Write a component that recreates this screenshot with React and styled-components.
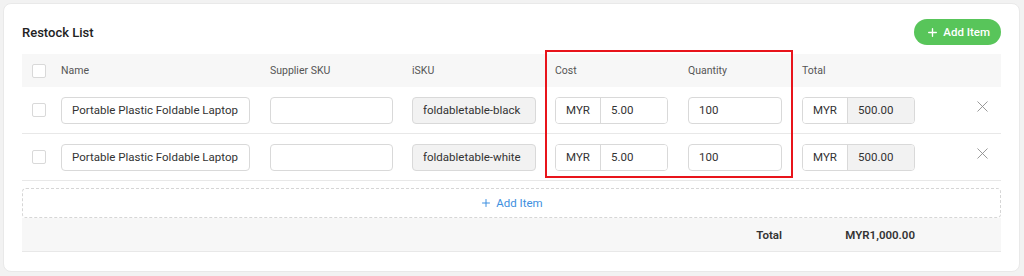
import React from 'react'
import styled, { createGlobalStyle } from 'styled-components'
import { X, Plus } from 'lucide-react'

const GlobalStyle = createGlobalStyle`
body {
    margin: 0;
    background: #f2f2f2;
    font-family: Roboto, "Liberation Sans", sans-serif;
}
`

const COLS = '29px 209px 142px 143px 133px 114px 113px 1fr'

const Card = styled.div`
margin: 3px;
width: 1017px;
height: 269px;
box-sizing: border-box;
background: #fff;
border: 1px solid #e9e9e9;
border-radius: 8px;
padding: 15px 18px 0 18px;
`
const TitleBar = styled.div`
display: flex;
align-items: center;
justify-content: space-between;
height: 26px;
margin-bottom: 9px;
`
const Title = styled.h2`
margin: 0;
font-size: 13px;
font-weight: 500;
color: #222;
`
const GreenButton = styled.button`
display: flex;
align-items: center;
gap: 4px;
height: 26px;
padding: 0 11px 0 12px;
border: none;
border-radius: 13px;
background: #58c55a;
color: #fff;
font-family: inherit;
font-size: 11.5px;
font-weight: 500;
`
const Table = styled.div`
position: relative;
`
const Row = styled.div`
display: grid;
grid-template-columns: ${COLS};
align-items: center;
padding-left: 10px;
height: ${p => p.$h}px;
background: ${p => p.$bg || '#fff'};
border-bottom: ${p => p.$line ? '1px solid #e8e8e8' : 'none'};
`
const HeadCell = styled.div`
font-size: 10.5px;
color: #555;
`
const Check = styled.span`
display: block;
width: 12px;
height: 12px;
border: 1px solid #d9d9d9;
border-radius: 2px;
background: #fff;
`
const Input = styled.input`
box-sizing: border-box;
width: ${p => p.$w}px;
height: 27px;
padding: 0 10px;
border: 1px solid #d9d9d9;
border-radius: 4px;
background: ${p => p.readOnly && p.$grey ? '#f2f2f2' : '#fff'};
font-family: inherit;
font-size: 11.5px;
color: #333;
outline: none;
`
const Group = styled.div`
display: flex;
box-sizing: border-box;
width: 113px;
height: 27px;
border: 1px solid #d9d9d9;
border-radius: 4px;
overflow: hidden;
font-size: 11.5px;
color: #333;
`
const Addon = styled.span`
display: flex;
align-items: center;
justify-content: center;
width: 44px;
border-right: 1px solid #d9d9d9;
background: #fff;
`
const GroupValue = styled.span`
flex: 1;
display: flex;
align-items: center;
padding-left: 10px;
background: ${p => p.$grey ? '#f2f2f2' : '#fff'};
`
const Remove = styled.div`
display: flex;
justify-content: flex-end;
padding-right: 9px;
color: #8a8a8a;
margin-top: -8px;
`
const DashedAdd = styled.div`
display: flex;
align-items: center;
justify-content: center;
gap: 4px;
height: 30px;
box-sizing: border-box;
margin-top: 7px;
border: 1px dashed #d6d6d6;
border-radius: 4px;
color: #3d8fe0;
font-size: 11.5px;
`
const SumCell = styled.div`
text-align: right;
padding-right: ${p => p.$pr || 0}px;
font-size: 11.5px;
font-weight: 600;
color: #333;
`
const Highlight = styled.div`
position: absolute;
left: 523px;
top: -4px;
width: 248px;
height: 128px;
box-sizing: border-box;
border: 2px solid #e8141b;
pointer-events: none;
`

const items = [
    { name: 'Portable Plastic Foldable Laptop Table', isku: 'foldabletable-black' },
    { name: 'Portable Plastic Foldable Laptop Table', isku: 'foldabletable-white' },
]

export default function App() {
    return (
        <>
            <GlobalStyle />
            <Card>
                <TitleBar>
                    <Title>Restock List</Title>
                    <GreenButton><Plus size={13} strokeWidth={2.5} />Add Item</GreenButton>
                </TitleBar>
                <Table>
                    <Row $h={33} $bg="#f7f7f7">
                        <Check />
                        <HeadCell>Name</HeadCell>
                        <HeadCell>Supplier SKU</HeadCell>
                        <HeadCell>iSKU</HeadCell>
                        <HeadCell>Cost</HeadCell>
                        <HeadCell>Quantity</HeadCell>
                        <HeadCell>Total</HeadCell>
                        <div />
                    </Row>
                    {items.map(it => (
                        <Row $h={46} $line key={it.isku}>
                            <Check />
                            <Input $w={189} defaultValue={it.name} />
                            <Input $w={123} defaultValue="" />
                            <Input $w={124} $grey readOnly defaultValue={it.isku} />
                            <Group><Addon>MYR</Addon><GroupValue>5.00</GroupValue></Group>
                            <Input $w={94} defaultValue="100" />
                            <Group><Addon>MYR</Addon><GroupValue $grey>500.00</GroupValue></Group>
                            <Remove><X size={19} strokeWidth={1.1} /></Remove>
                        </Row>
                    ))}
                    <DashedAdd><Plus size={12} strokeWidth={2} />Add Item</DashedAdd>
                    <Row $h={33} $bg="#f7f7f7" $line>
                        <div /><div /><div /><div /><div />
                        <SumCell $pr={20}>Total</SumCell>
                        <SumCell>MYR1,000.00</SumCell>
                        <div />
                    </Row>
                    <Highlight />
                </Table>
            </Card>
        </>
    )
}
